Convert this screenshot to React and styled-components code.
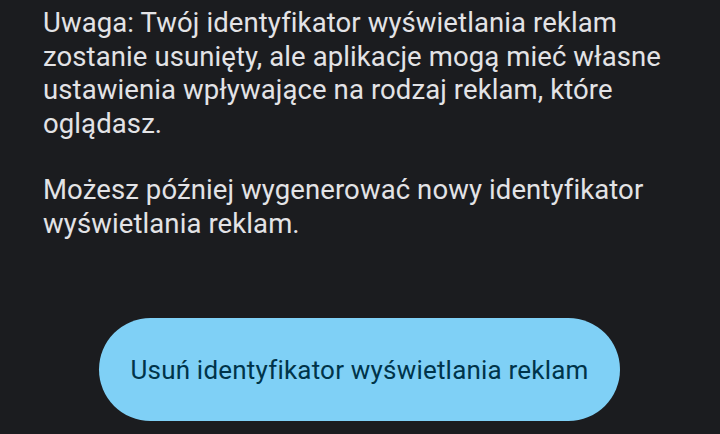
import React from 'react';
import styled, { createGlobalStyle } from 'styled-components';

const GlobalStyle = createGlobalStyle`
  html, body { margin: 0; padding: 0; background: #1b1c1f; }
  body { font-family: Roboto, "Noto Sans", sans-serif; }
`;

const Screen = styled.div`
  width: 720px; height: 434px; overflow: hidden;
  background: #1b1c1f; box-sizing: border-box;
  padding: 6px 30px 0 43px;
  display: flex; flex-direction: column;
`;

const Note = styled.p`
  margin: 0 0 33px 0;
  color: #e3e3e6; font-size: 27.5px; line-height: 33.5px;
  letter-spacing: 0.1px;
`;

const ButtonRow = styled.div`
  display: flex; justify-content: flex-start;
  margin-top: 45px; padding-left: 56px;
`;

const PillButton = styled.button`
  width: 521px; height: 103px; border: none; border-radius: 52px;
  background: #7fd0f6; color: #00344a;
  font-family: Roboto, "Noto Sans", sans-serif; font-size: 26px;
  letter-spacing: 0.2px;
  display: flex; align-items: center; justify-content: center;
  cursor: pointer;
`;

export default function App() {
    return (
        <>
            <GlobalStyle />
            <Screen>
                <Note>
                    Uwaga: Twój identyfikator wyświetlania reklam zostanie usunięty, ale aplikacje mogą mieć własne ustawienia wpływające na rodzaj reklam, które oglądasz.
                </Note>
                <Note>
                    Możesz później wygenerować nowy identyfikator wyświetlania reklam.
                </Note>
                <ButtonRow>
                    <PillButton>Usuń identyfikator wyświetlania reklam</PillButton>
                </ButtonRow>
            </Screen>
        </>
    );
}
